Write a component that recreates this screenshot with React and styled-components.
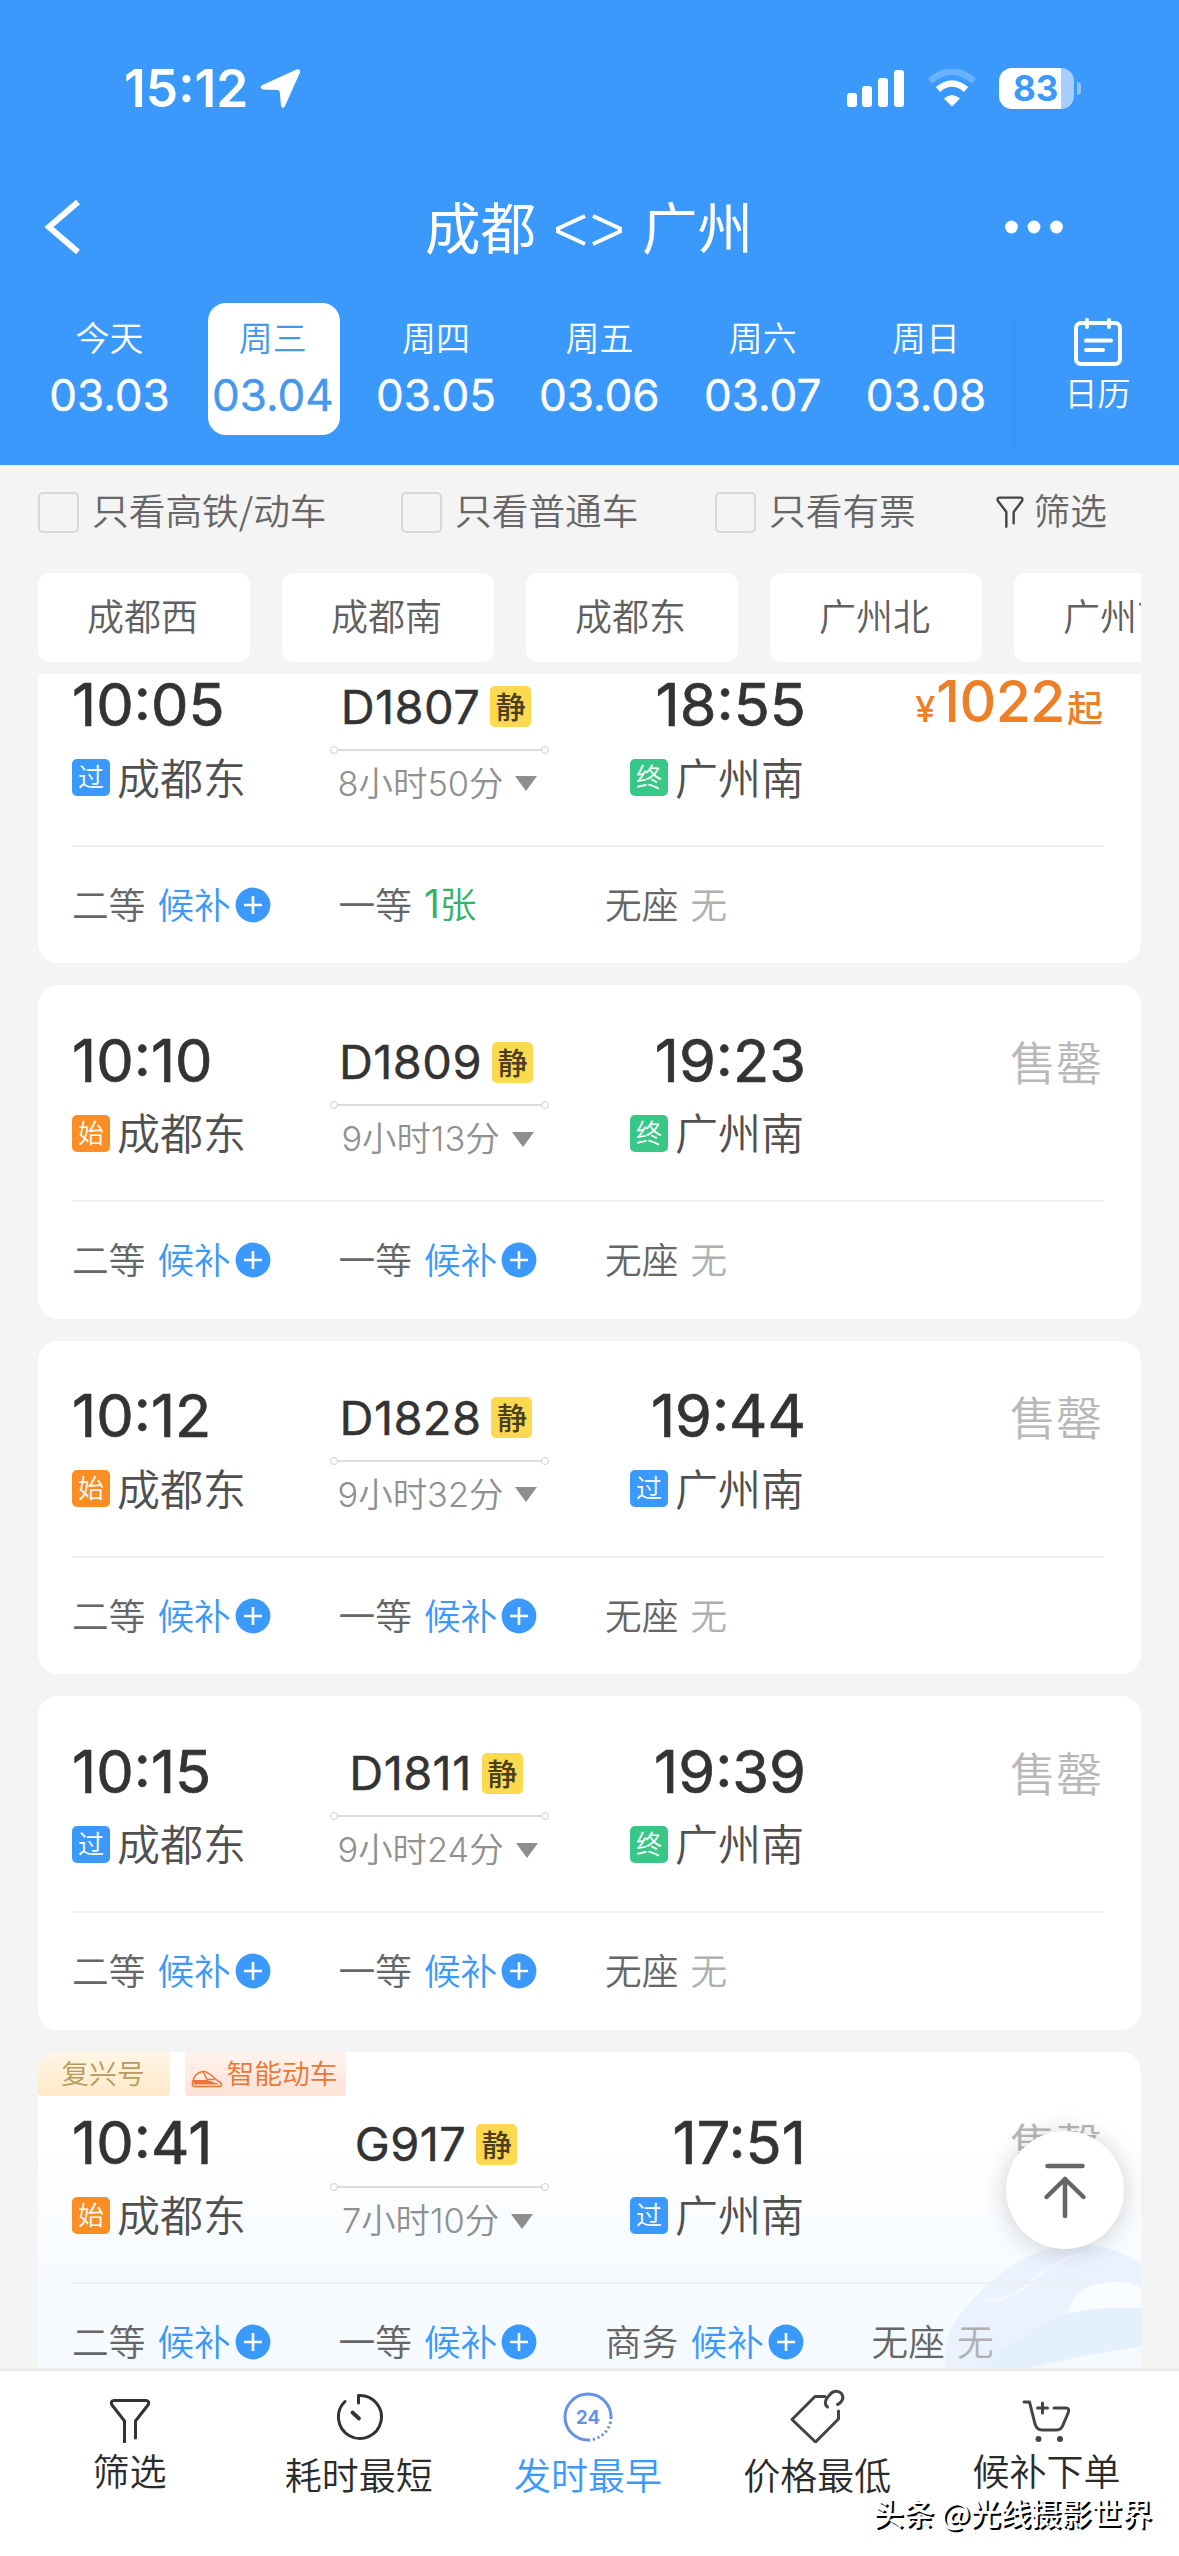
import React from "react";
import styled, { createGlobalStyle, css } from "styled-components";

const BLUE = "#3c99fc";
const CJK = `"Noto Sans CJK SC", "Noto Sans", sans-serif`;
const LATIN = `Inter, "Noto Sans CJK SC", sans-serif`;

const GlobalStyle = createGlobalStyle`
  * { box-sizing: border-box; }
  body { margin: 0; background: #f4f4f4; }
`;

const Screen = styled.div`
  width: 1179px;
  height: 2556px;
  display: flex;
  flex-direction: column;
  overflow: hidden;
  background: #f4f4f4;
  font-family: ${CJK};
  font-weight: 350;
  color: #333;
  white-space: nowrap;
`;

/* Lifts a label by half of $by inside a vertically centred row. */
const Raised = styled.span`
  padding-bottom: ${(p) => p.$by || 3}px;
`;

/* ---------- header ---------- */
const Header = styled.header`
  flex: none;
  height: 465px;
  display: flex;
  flex-direction: column;
  background: ${BLUE};
  color: #fff;
`;
const StatusBar = styled.div`
  height: 176px;
  padding: 0 98px 0 124px;
  display: flex;
  align-items: center;
  justify-content: space-between;
`;
const Clock = styled.div`
  display: flex;
  align-items: center;
  gap: 12px;
  font: 600 51.5px/60px ${LATIN};
`;
const StatusIcons = styled.div`
  display: flex;
  align-items: center;
  gap: 21px;
`;
const Battery = styled.div`
  width: 82px;
  height: 41px;
  display: flex;
  align-items: center;
`;
const BatteryBody = styled.div`
  width: 75px;
  height: 41px;
  border-radius: 13px;
  background: linear-gradient(90deg, #fff 62px, #a6cffd 62px);
  color: ${BLUE};
  font: 700 35px/41px ${LATIN};
  padding-left: 14px;
`;
const BatteryNub = styled.div`
  width: 4px;
  height: 13px;
  margin-left: 3px;
  border-radius: 0 5px 5px 0;
  background: #8fc3fd;
`;
const NavBar = styled.div`
  height: 102px;
  padding: 0 110px 0 43px;
  display: grid;
  grid-template-columns: 280px 1fr 280px;
  align-items: center;
  & > :last-child { justify-self: end; }
`;
const Title = styled.h1`
  margin: -4px 0 0 66px;
  display: flex;
  justify-content: center;
  align-items: center;
  gap: 19px;
  font: 400 55.5px/64px ${CJK};
  svg { margin-top: 9px; }
`;
const Dates = styled.div`
  position: relative;
  flex: 1;
  display: flex;
  padding-left: 45px;
  padding-top: 25px;
`;
const DateItem = styled.div`
  width: 132px;
  height: 132px;
  flex: none;
  margin-right: 31.3px;
  padding: 12px 0 0 0;
  border-radius: 18px;
  text-align: center;
  ${(p) => p.$active && css`background: #fff; color: #4698ee;`}
`;
const Weekday = styled.div`
  font-size: 34px;
  line-height: 44px;
  margin-left: -3px;
`;
const DateText = styled.div`
  margin: 10px 0 0 -3px;
  font: 400 44px/52px ${LATIN};
  -webkit-text-stroke: 0.4px;
`;
const Calendar = styled.div`
  position: absolute;
  right: 0;
  top: 31px;
  width: 163px;
  height: 145px;
  padding: 8px 0 0 0;
  display: flex;
  flex-direction: column;
  align-items: center;
  background: ${BLUE};
  box-shadow: -8px 0 14px -6px rgba(30, 100, 190, 0.2);
  font-size: 33px;
  line-height: 38px;
  gap: 6px;
`;

/* ---------- filters ---------- */
const Filters = styled.div`
  flex: none;
  height: 108px;
  padding: 26px 72px 0 38px;
  display: flex;
  align-items: flex-start;
  color: #666;
  font-size: 36.7px;
  line-height: 37px;
`;
const Check = styled.label`
  display: flex;
  align-items: center;
  gap: 13px;
  width: ${(p) => p.$w}px;
  flex: none;
`;
const Box = styled.span`
  width: 41px;
  height: 41px;
  border: 2px solid #d8d8d8;
  border-radius: 5px;
`;
const FilterLink = styled.div`
  display: flex;
  align-items: center;
  gap: 10px;
  margin-left: auto;
`;
const Chips = styled.div`
  flex: none;
  height: 101px;
  margin: 0 38px;
  display: flex;
  gap: 32px;
  overflow: hidden;
`;
const Chip = styled.div`
  flex: none;
  width: 212px;
  height: 89px;
  padding-right: 3px;
  border-radius: 12px;
  background: #fff;
  color: #606060;
  text-align: center;
  font-size: 37px;
  line-height: 84px;
`;

/* ---------- list ---------- */
const List = styled.main`
  flex: none;
  position: relative;
  height: 1694px;
  padding: 0 38px;
  overflow: hidden;
`;
const Stack = styled.div`
  margin-top: -44.5px;
  display: flex;
  flex-direction: column;
  gap: 22px;
`;
const Card = styled.article`
  position: relative;
  height: ${(p) => (p.$tagged ? 349 : 333.5)}px;
  flex: none;
  overflow: hidden;
  border-radius: 20px;
  background: ${(p) => (p.$tagged ? "linear-gradient(#fff 20%, #f7fbff 65%, #f4faff)" : "#fff")};
`;
const Tags = styled.div`
  height: 44px;
  margin-bottom: -28.5px;
  display: flex;
  gap: 15px;
`;
const Tag = styled.div`
  height: 44px;
  width: ${(p) => p.$w}px;
  border-radius: 0 0 4px 4px;
  display: flex;
  justify-content: center;
  align-items: center;
  gap: 3px;
  padding: 0 2px 4px 0;
  font-size: 27.8px;
  line-height: 38px;
  background: ${(p) => (p.$smart ? "linear-gradient(#fff3ee, #fde2d6)" : "linear-gradient(#fff6e6, #fde9c9)")};
  color: ${(p) => (p.$smart ? "#ec7434" : "#b99a5b")};
  svg { margin-top: 15px; }
`;
const Trip = styled.div`
  position: relative;
  height: 217px;
  margin: 0 37px 0 34px;
  padding-top: 44.5px;
  display: grid;
  grid-template-columns: 258px 219px 255px 1fr;
  border-bottom: 2px solid #eeeff1;
`;
const Stop = styled.div`
  display: flex;
  flex-direction: column;
  align-items: ${(p) => (p.$end ? "flex-end" : "flex-start")};
`;
const Time = styled.div`
  margin-right: -2px;
  font: 400 59.5px/60px ${LATIN};
  -webkit-text-stroke: 0.7px;
`;
const Station = styled.div`
  margin-top: 21.5px;
  display: flex;
  align-items: center;
  gap: 7px;
  font-size: 43px;
  line-height: 41px;
  color: #505050;
`;
const STOP_COLORS = { 过: BLUE, 始: "#fa8e24", 终: "#37c887" };
const StopMark = styled.span`
  width: 38px;
  height: 37px;
  border-radius: 5px;
  background: ${(p) => STOP_COLORS[p.$kind]};
  color: #fff;
  font-size: 26px;
  line-height: 34px;
  text-align: center;
`;
const Middle = styled.div`
  display: flex;
  flex-direction: column;
  align-items: center;
  padding-top: 7.5px;
`;
const TrainNo = styled.div`
  display: flex;
  align-items: center;
  gap: 10px;
  height: 50px;
  margin-right: 7px;
  font: 400 47px/50px ${LATIN};
  letter-spacing: 0.4px;
  -webkit-text-stroke: 0.4px;
`;
const Quiet = styled.span`
  width: 41px;
  height: 41px;
  border-radius: 5px;
  background: #fdd94f;
  color: #4a4020;
  font: 500 30px/38px ${CJK};
  letter-spacing: 0;
  -webkit-text-stroke: 0;
  text-align: center;
`;
const Route = styled.div`
  width: 219px;
  height: 6px;
  margin: 15px 0 13px;
  display: flex;
  align-items: center;
  &::before, &::after {
    content: "";
    width: 6px;
    height: 6px;
    border: 1.5px solid #cfcfcf;
    border-radius: 50%;
  }
`;
const RouteLine = styled.i`
  flex: 1;
  height: 2px;
  background: #dcdcdc;
`;
const Duration = styled.div`
  display: flex;
  align-items: center;
  gap: 12px;
  margin-right: 4px;
  font: 350 34.4px/36px ${LATIN};
  color: #909090;
`;
const Triangle = styled.i`
  width: 0;
  border: 11px solid transparent;
  border-top: 15px solid #8e8e8e;
  border-bottom: 0;
`;
const Price = styled.div`
  height: 60px;
  display: flex;
  align-items: baseline;
  justify-content: flex-end;
  color: #ed7f27;
  font: 500 36px/60px ${CJK};
  margin: -2px 1px 0 0;
`;
const Yen = styled.span`
  font: 500 36px/60px ${LATIN};
`;
const Amount = styled.span`
  font: 500 57px/60px ${LATIN};
  letter-spacing: -0.5px;
  margin: 0 2px 0 1px;
`;
const SoldOut = styled.div`
  margin: 2px 2px 0 0;
  text-align: right;
  font-size: 46px;
  line-height: 56px;
  color: #b8b8b8;
`;
const Seats = styled.div`
  position: relative;
  height: 116px;
  padding-left: 34px;
  display: grid;
  grid-template-columns: repeat(4, 266.5px);
  align-items: center;
`;
const Seat = styled.div`
  display: flex;
  align-items: center;
  gap: 12px;
  font-size: 36.7px;
  line-height: 41px;
  color: #666;
`;
const SEAT_COLORS = { 候补: BLUE, 无: "#b0b0b0" };
const SeatState = styled.span`
  display: flex;
  align-items: center;
  gap: 4px;
  color: ${(p) => SEAT_COLORS[p.$state] || "#35b263"};
`;
const Count = styled.span`
  font: 400 39px/41px Inter, sans-serif;
`;
const Art = styled.svg`
  position: absolute;
  right: 0;
  top: 180px;
`;
const TopButton = styled.button`
  position: absolute;
  left: 1006px;
  top: 1457px;
  width: 118px;
  height: 118px;
  padding: 0;
  border: 0;
  border-radius: 50%;
  background: #fff;
  box-shadow: 0 2px 26px rgba(0, 0, 0, 0.18);
`;

/* ---------- bottom bar ---------- */
const TabBar = styled.nav`
  position: relative;
  flex: 1;
  padding: 0 18px 0 15px;
  display: grid;
  grid-template-columns: repeat(5, 1fr);
  background: #fff;
  border-top: 3px solid #ececec;
`;
const Tab = styled.div`
  display: flex;
  flex-direction: column;
  align-items: center;
  padding-top: 16px;
  font-size: 37px;
  line-height: 44px;
  color: ${(p) => (p.$active ? BLUE : "#2b2b2b")};
  svg { flex: none; margin-bottom: ${(p) => (p.$low ? 9 : 5)}px; }
`;
const Watermark = styled.div`
  position: absolute;
  right: 27px;
  bottom: 24px;
  font: 500 30.3px/40px ${CJK};
  color: #fff;
  text-shadow: 2px 2px 0 #000;
`;

const Funnel = ({ w, h, color, stroke }) => (
  <svg width={w} height={h} viewBox="0 0 42 48" fill="none" stroke={color} strokeWidth={stroke} strokeLinecap="round" strokeLinejoin="round">
    <path d="M15.5 46V24L3 7.5Q1 3 5 2.500H37Q41 3 39 7.500L26.500 24V41" />
  </svg>
);

const Plus = () => (
  <svg width="36" height="36" viewBox="0 0 36 36">
    <circle cx="18" cy="18" r="17.400" fill={BLUE} />
    <path d="M9 18h18M18 9v18" stroke="#fff" strokeWidth="2.600" />
  </svg>
);

const TimerIcon = () => (
  <svg width="50" height="56" viewBox="0 0 50 56" fill="none" stroke="#333" strokeWidth="3" strokeLinecap="round" strokeLinejoin="round">
    <path d="M24.500 16V8.500A21.500 21.500 0 1 1 11 14.500" />
    <path d="M18.500 25.500L25 31.500" strokeWidth="3.800" />
  </svg>
);

const DayIcon = () => (
  <svg width="50" height="56" viewBox="0 0 50 56" fill="none" stroke="#6592e6" strokeWidth="3">
    <path d="M25 53A23 23 0 1 1 48 30" />
    <path d="M48 30A23 23 0 0 1 25 53" strokeDasharray="2.200 2.600" />
    <text x="25" y="37" textAnchor="middle" fill="#6592e6" stroke="none" fontFamily="Inter, sans-serif" fontWeight="700" fontSize="18.500">24</text>
  </svg>
);

const PriceIcon = () => (
  <svg width="58" height="56" viewBox="0 0 58 56" fill="none" stroke="#444" strokeWidth="3" strokeLinecap="round" strokeLinejoin="round">
    <path d="M37 9.500H27L4 32.500L27.500 55L50.500 32V24" />
    <path d="M39.500 20C35.500 17 37.500 12 41.500 8C45 3.500 50 3 53.500 6.500C57 11.500 53 16 49.500 17.500" />
  </svg>
);

const CartIcon = () => (
  <svg width="50" height="56" viewBox="0 0 50 56" fill="none" stroke="#444" strokeWidth="3" strokeLinecap="round" strokeLinejoin="round">
    <path d="M3 15H8.500L14 37Q16 43 21 43H36Q40 43 42 38L47.500 25Q48.500 21 45 21H33" />
    <path d="M16.500 21h10M21.500 16v10" />
    <circle cx="17.500" cy="52" r="1.500" fill="#444" />
    <circle cx="39" cy="52" r="1.500" fill="#444" />
  </svg>
);

const TrainIcon = () => (
  <svg width="32" height="18" viewBox="0 0 32 18" fill="none" stroke="#ec7434" strokeWidth="1.500" strokeLinejoin="round">
    <path d="M1.500 12C3 6 7 2 12 1.500C18 1 22 8 30.500 13.500Q31 16.500 28 16.500H3Q1 16.500 1.500 12Z" />
    <path d="M12 1.500L16 9.500M16 9.500L24 9.500" />
    <path d="M2 10H16L29 14.500L3 14.500Z" fill="#ec7434" stroke="none" />
  </svg>
);

const DATES = [
  ["今天", "03.03"], ["周三", "03.04"], ["周四", "03.05"],
  ["周五", "03.06"], ["周六", "03.07"], ["周日", "03.08"],
];

const TRAINS = [
  { dep: "10:05", from: "过", no: "D1807", dur: "8小时50分", arr: "18:55", to: "终", price: "1022", seats: [["二等", "候补"], ["一等", "张", 1], ["无座", "无"]] },
  { dep: "10:10", from: "始", no: "D1809", dur: "9小时13分", arr: "19:23", to: "终", seats: [["二等", "候补"], ["一等", "候补"], ["无座", "无"]] },
  { dep: "10:12", from: "始", no: "D1828", dur: "9小时32分", arr: "19:44", to: "过", seats: [["二等", "候补"], ["一等", "候补"], ["无座", "无"]] },
  { dep: "10:15", from: "过", no: "D1811", dur: "9小时24分", arr: "19:39", to: "终", seats: [["二等", "候补"], ["一等", "候补"], ["无座", "无"]] },
  { dep: "10:41", from: "始", no: "G917", dur: "7小时10分", arr: "17:51", to: "过", tagged: true, seats: [["二等", "候补"], ["一等", "候补"], ["商务", "候补"], ["无座", "无"]] },
];

const TrainCard = ({ t }) => (
  <Card $tagged={t.tagged}>
    {t.tagged && (
      <>
        <Art width="200" height="150" viewBox="0 0 200 150">
          <path d="M10 150Q-4 120 16 86Q60 30 110 16Q160 4 200 32V114Q110 130 30 150Z" fill="#e9f2fe" />
          <path d="M200 76Q150 76 126 82Q134 50 170 50Q188 48 200 56Z" fill="#f8fbff" />
          <path d="M200 76Q160 74 126 82Q60 112 20 150H34Q100 128 200 114Z" fill="#e4f1fd" />
          <path d="M42 68Q70 70 90 50Q110 30 140 22" fill="none" stroke="#f4f7ff" strokeWidth="3" />
        </Art>
        <Tags>
          <Tag $w={132}>复兴号</Tag>
          <Tag $w={161} $smart><TrainIcon />智能动车</Tag>
        </Tags>
      </>
    )}
    <Trip>
      <Stop>
        <Time>{t.dep}</Time>
        <Station><StopMark $kind={t.from}>{t.from}</StopMark><Raised>成都东</Raised></Station>
      </Stop>
      <Middle>
        <TrainNo>{t.no}<Quiet>静</Quiet></TrainNo>
        <Route><RouteLine /></Route>
        <Duration>{t.dur}<Triangle /></Duration>
      </Middle>
      <Stop $end>
        <Time>{t.arr}</Time>
        <Station><StopMark $kind={t.to}>{t.to}</StopMark><Raised>广州南</Raised></Station>
      </Stop>
      {t.price ? <Price><Yen>¥</Yen><Amount>{t.price}</Amount>起</Price> : <SoldOut>售罄</SoldOut>}
    </Trip>
    <Seats>
      {t.seats.map(([name, state, count]) => (
        <Seat key={name}>
          <Raised>{name}</Raised>
          <SeatState $state={state}>
            <Raised>{count && <Count>{count}</Count>}{state}</Raised>
            {state === "候补" && <Plus />}
          </SeatState>
        </Seat>
      ))}
    </Seats>
  </Card>
);

export default function App() {
  return (
    <Screen>
      <GlobalStyle />
      <Header>
        <StatusBar>
          <Clock>
            15:12
            <svg width="41" height="41" viewBox="0 0 41 41">
              <path d="M36.500 1.500Q40.500 0 40 4.500L25 38Q22.500 42 21 37.500L19.800 24Q19.500 22 17.500 22L3 21.500Q-1.500 20 2.500 17Z" fill="#fff" />
            </svg>
          </Clock>
          <StatusIcons>
            <svg width="60" height="38" viewBox="1 0 60 38" fill="#fff">
              <rect x="1" y="24" width="10" height="14" rx="3" />
              <rect x="16" y="17" width="10" height="21" rx="3" />
              <rect x="32" y="9" width="10" height="29" rx="3" />
              <rect x="48" y="1" width="10" height="37" rx="3" />
            </svg>
            <svg width="50" height="38" viewBox="1 0 50 38" fill="none">
              <path d="M3 12Q25 -7 47 12" stroke="#69b1fd" strokeWidth="6.500" />
              <path d="M11 20.500Q25 8.500 39 20.500" stroke="#fff" strokeWidth="6.500" />
              <path d="M17 29.500Q25 22.500 33 29.500L25 37.500Z" fill="#fff" />
            </svg>
            <Battery><BatteryBody>83</BatteryBody><BatteryNub /></Battery>
          </StatusIcons>
        </StatusBar>
        <NavBar>
          <svg width="40" height="56" viewBox="0 0 40 56" fill="none" stroke="#fff" strokeWidth="6">
            <path d="M35 3L6 28L35 53" />
          </svg>
          <Title>
            成都
            <svg width="68" height="32" viewBox="0 0 68 32" fill="none" stroke="#fff" strokeWidth="4">
              <path d="M30 2L3 14.500V17.500L30 30M38 2L65 14.500V17.500L38 30" />
            </svg>
            广州
          </Title>
          <svg width="64" height="14" viewBox="0 0 64 14" fill="#fff">
            <circle cx="6.500" cy="7" r="6.400" /><circle cx="29" cy="7" r="6.400" /><circle cx="51.500" cy="7" r="6.400" />
          </svg>
        </NavBar>
        <Dates>
          {DATES.map(([w, d], i) => (
            <DateItem key={d} $active={i === 1}>
              <Weekday>{w}</Weekday>
              <DateText>{d}</DateText>
            </DateItem>
          ))}
          <Calendar>
            <svg width="50" height="50" viewBox="0 0 50 50" fill="none" stroke="#fff" strokeWidth="4" strokeLinecap="round">
              <rect x="3" y="6" width="44" height="41" rx="5" />
              <path d="M14 3v7M36 3v7M13 23.500h25M13 33h17" />
            </svg>
            日历
          </Calendar>
        </Dates>
      </Header>

      <Filters>
        <Check $w={363}><Box /><Raised $by={5}>只看高铁/动车</Raised></Check>
        <Check $w={314}><Box /><Raised $by={5}>只看普通车</Raised></Check>
        <Check $w={240}><Box /><Raised $by={5}>只看有票</Raised></Check>
        <FilterLink>
          <Funnel w={28} h={34} color="#444" stroke={3.6} />
          <Raised $by={4}>筛选</Raised>
        </FilterLink>
      </Filters>
      <Chips>
        {["成都西", "成都南", "成都东", "广州北", "广州南"].map((n) => <Chip key={n}>{n}</Chip>)}
      </Chips>

      <List>
        <Stack>
          {TRAINS.map((t) => <TrainCard key={t.no} t={t} />)}
        </Stack>
        <TopButton>
          <svg width="118" height="118" viewBox="0 0 118 118" fill="none" stroke="#666" strokeWidth="4.500" strokeLinecap="round" strokeLinejoin="round">
            <path d="M41.500 35h35M59 85V48M40.500 66L59 48L77.500 66" />
          </svg>
        </TopButton>
      </List>

      <TabBar>
        <Tab>
          <svg width="50" height="56" viewBox="0 0 50 56" fill="none" stroke="#333" strokeWidth="3" strokeLinecap="round" strokeLinejoin="round">
            <path d="M19.500 56V34L7 18Q5 14 9 13.500H41Q45 14 43 18L30.500 34V51" />
          </svg>
          筛选
        </Tab>
        <Tab $low><TimerIcon />耗时最短</Tab>
        <Tab $low $active><DayIcon />发时最早</Tab>
        <Tab $low><PriceIcon />价格最低</Tab>
        <Tab><CartIcon />候补下单</Tab>
        <Watermark>头条 @光线摄影世界</Watermark>
      </TabBar>
    </Screen>
  );
}
